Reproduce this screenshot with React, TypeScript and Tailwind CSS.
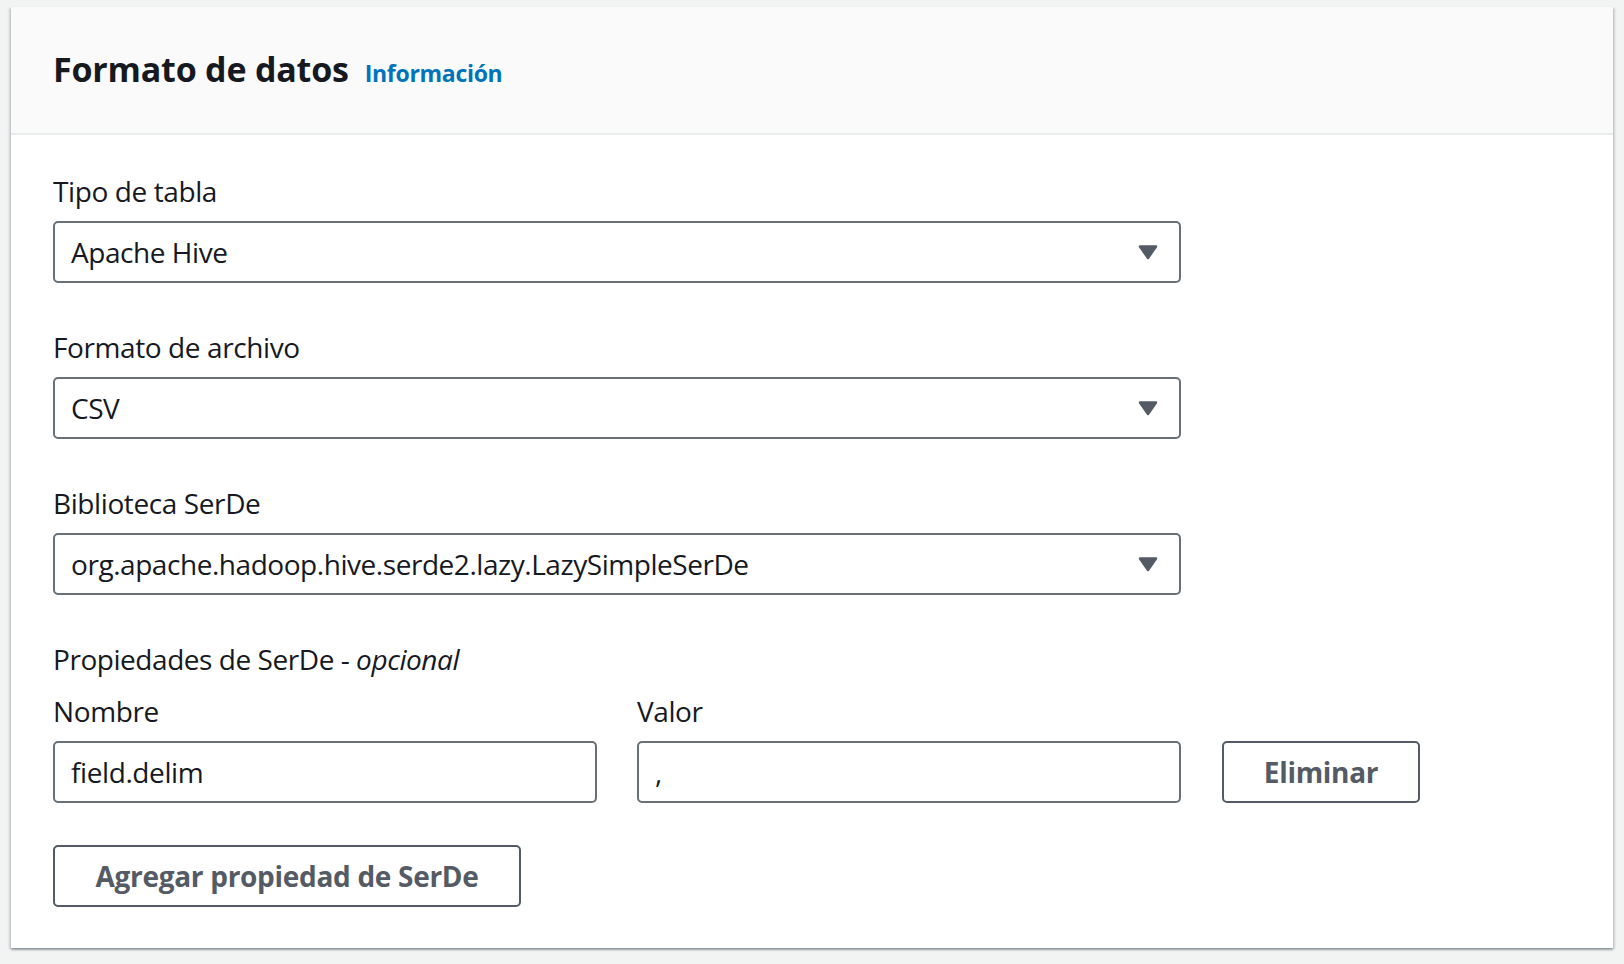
import React from "react";

const font = { fontFamily: '"Open Sans", "Noto Sans", sans-serif' };

function Caret() {
  return (
    <svg width="20" height="16" viewBox="0 0 20 16" className="shrink-0">
      <path d="M2 2.5 H18 L10 14 Z" fill="#545b64" stroke="#545b64" strokeWidth="2.5" strokeLinejoin="round" />
    </svg>
  );
}

function Select({ value }: { value: string }) {
  return (
    <div className="flex h-[62px] w-[1128px] items-center justify-between rounded-[5px] border-2 border-[#687078] bg-white pl-[16px] pr-[21px]">
      <span className="text-[28px] text-[#16191f] tracking-[-0.45px]">{value}</span>
      <Caret />
    </div>
  );
}

function Field({ label, value }: { label: string; value: string }) {
  return (
    <div className="flex flex-col">
      <div className="h-[40px] text-[28px] leading-[40px] text-[#16191f] tracking-[-0.4px]">{label}</div>
      <div className="mt-[10px]">
        <Select value={value} />
      </div>
    </div>
  );
}

function TextInput({ value }: { value: string }) {
  return (
    <div className="flex h-[62px] w-[544px] items-center rounded-[5px] border-2 border-[#687078] bg-white pl-[16px]">
      <span className="text-[28px] text-[#16191f] tracking-[-0.4px]">{value}</span>
    </div>
  );
}

export default function App() {
  return (
    <div className="min-h-[964px] w-[1624px] bg-[#f2f3f3] pl-[11px] pr-[11px] pt-[7px]" style={font}>
      <div className="w-[1602px] bg-white shadow-[0_2px_2px_0_rgba(0,28,36,0.3),2px_1px_2px_0_rgba(0,28,36,0.12),-2px_1px_2px_0_rgba(0,28,36,0.12)]">
        <div className="flex h-[128px] items-center border-b-2 border-[#eaeded] bg-[#fafafa] pl-[42px]">
          <div className="-mt-[2px] flex items-baseline gap-[16px]">
            <h2 className="text-[34px] font-bold text-[#16191f] tracking-[-0.2px]">Formato de datos</h2>
            <a className="text-[23px] font-bold text-[#0073bb] tracking-[-0.3px]">Información</a>
          </div>
        </div>
        <div className="flex flex-col pl-[42px] pr-[42px] pt-[36px] pb-[41px]">
          <Field label="Tipo de tabla" value="Apache Hive" />
          <div className="mt-[44px]">
            <Field label="Formato de archivo" value="CSV" />
          </div>
          <div className="mt-[44px]">
            <Field label="Biblioteca SerDe" value="org.apache.hadoop.hive.serde2.lazy.LazySimpleSerDe" />
          </div>
          <div className="mt-[44px] h-[40px] text-[28px] leading-[40px] text-[#16191f] tracking-[-0.45px]">
            Propiedades de SerDe - <i>opcional</i>
          </div>
          <div className="mt-[12px] flex items-end">
            <div className="flex flex-col">
              <div className="h-[40px] text-[28px] leading-[40px] text-[#16191f] tracking-[-0.4px]">Nombre</div>
              <div className="mt-[10px]">
                <TextInput value="field.delim" />
              </div>
            </div>
            <div className="ml-[40px] flex flex-col">
              <div className="h-[40px] text-[28px] leading-[40px] text-[#16191f] tracking-[-0.4px]">Valor</div>
              <div className="mt-[10px]">
                <TextInput value="," />
              </div>
            </div>
            <button className="ml-[41px] flex h-[62px] w-[198px] items-center justify-center rounded-[5px] border-2 border-[#545b64] bg-white text-[28px] font-bold text-[#545b64] tracking-[-0.3px]">
              Eliminar
            </button>
          </div>
          <div className="mt-[42px]">
            <button className="flex h-[62px] w-[468px] items-center justify-center rounded-[5px] border-2 border-[#545b64] bg-white text-[28px] font-bold text-[#545b64] tracking-[-0.3px]">
              Agregar propiedad de SerDe
            </button>
          </div>
        </div>
      </div>
    </div>
  );
}
